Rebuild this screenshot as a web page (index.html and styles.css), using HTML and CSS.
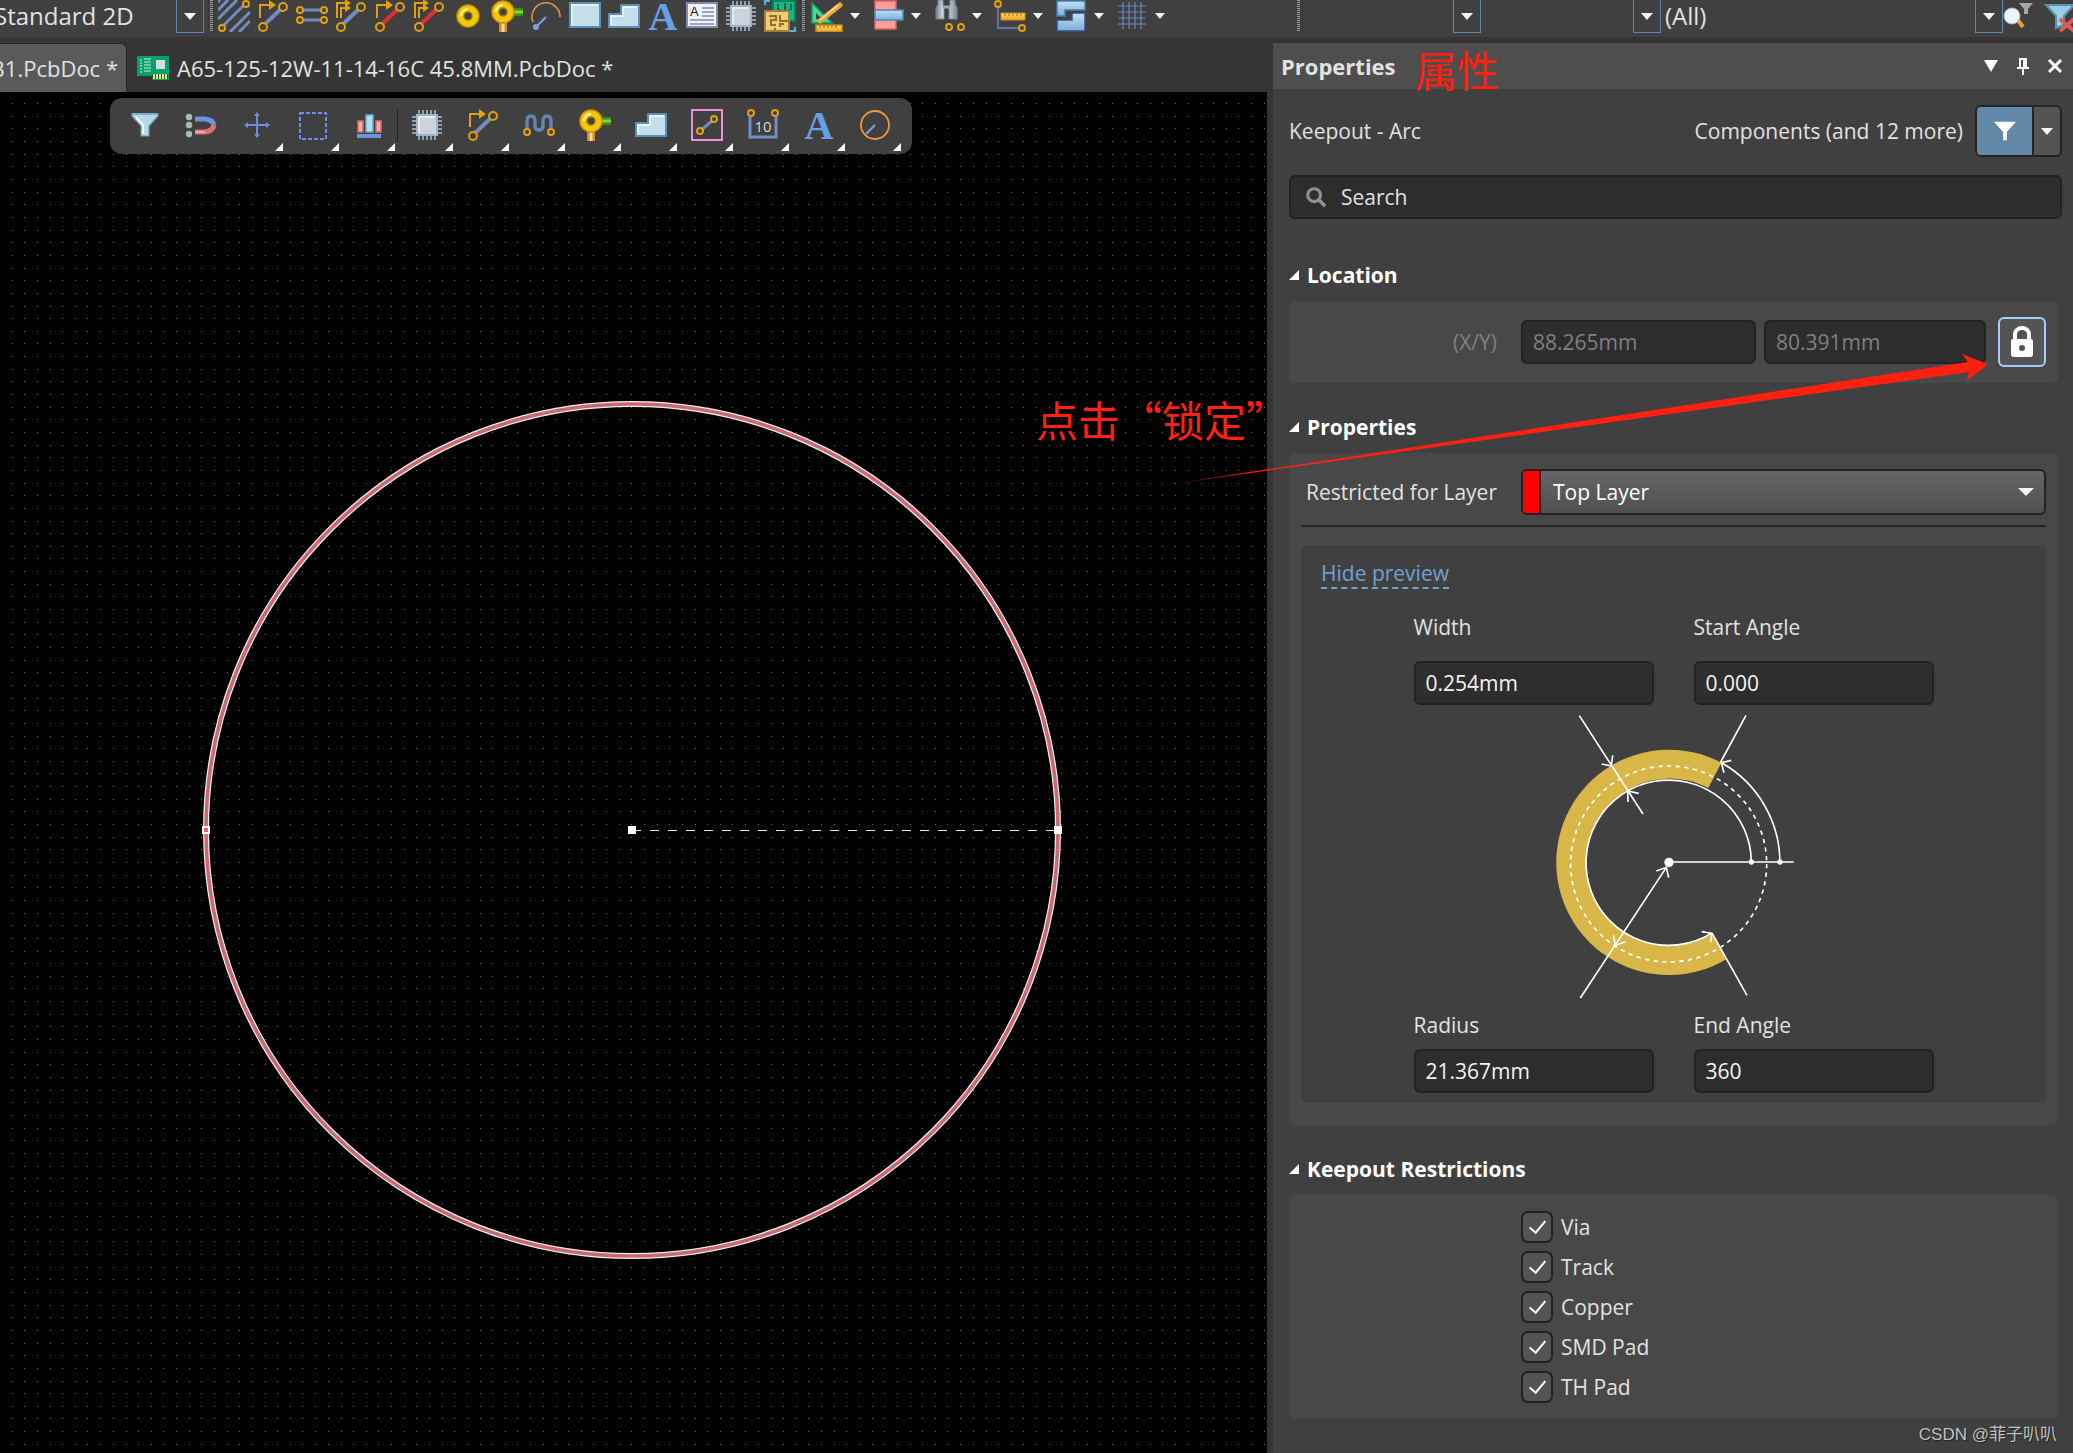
FILE: index.html
```html
<!DOCTYPE html>
<html lang="en">
<head>
<meta charset="utf-8">
<title>PCB Editor</title>
<link rel="stylesheet" href="styles.css">
</head>
<body>
<svg class="defs" width="0" height="0" aria-hidden="true">
  <defs>
    <linearGradient id="blueGrad" x1="0" y1="0" x2="0" y2="1"><stop offset="0" stop-color="#c4dff0"/><stop offset="1" stop-color="#78b0d8"/></linearGradient>
    <linearGradient id="goldGrad" x1="0" y1="0" x2="0" y2="1"><stop offset="0" stop-color="#ffe070"/><stop offset="1" stop-color="#e8a020"/></linearGradient>
    <linearGradient id="steelGrad" x1="0" y1="0" x2="1" y2="0"><stop offset="0" stop-color="#708090"/><stop offset=".4" stop-color="#e4ecf2"/><stop offset="1" stop-color="#7c8a98"/></linearGradient>
  </defs>
  <symbol id="i-hatch" viewBox="0 0 32 32"><path d="M0 10 10 0M0 19 19 0M6 25 26 5M12 32 32 12M21 32 32 21M0 2 2 0" stroke="#6f8fc4" stroke-width="3" fill="none"/><g fill="#404040" stroke="#e0a010" stroke-width="2"><circle cx="28" cy="4" r="3"/><circle cx="4" cy="28" r="3"/></g></symbol>
  <symbol id="i-route" viewBox="0 0 32 32"><path d="M6 26 26 7" stroke="#6f8cbd" stroke-width="4"/><path d="M3 18V5h11" stroke="#e0a010" stroke-width="2" fill="none"/><path d="M12 0l7 5-7 5z" fill="#e0a010"/><g fill="#404040" stroke="#e0a010" stroke-width="2"><circle cx="26" cy="7" r="4"/><circle cx="6" cy="27" r="4"/></g></symbol>
  <symbol id="i-route-red" viewBox="0 0 32 32"><path d="M6 26 26 7" stroke="#e03030" stroke-width="4"/><path d="M3 18V5h11" stroke="#e0a010" stroke-width="2" fill="none"/><path d="M12 0l7 5-7 5z" fill="#e0a010"/><g fill="#404040" stroke="#e0a010" stroke-width="2"><circle cx="26" cy="7" r="4"/><circle cx="6" cy="27" r="4"/></g></symbol>
  <symbol id="i-multi" viewBox="0 0 32 32"><path d="M6 26 26 7" stroke="#6f8cbd" stroke-width="4"/><path d="M2 18V3h10M6 18V8h6" stroke="#e0a010" stroke-width="2" fill="none"/><path d="M10-1l6 4-6 4zM10 4l6 4-6 4z" fill="#e0a010"/><g fill="#404040" stroke="#e0a010" stroke-width="2"><circle cx="26" cy="7" r="4"/><circle cx="6" cy="27" r="4"/></g></symbol>
  <symbol id="i-multi-red" viewBox="0 0 32 32"><path d="M6 26 26 7" stroke="#e03030" stroke-width="4"/><path d="M2 18V3h10M6 18V8h6" stroke="#e0a010" stroke-width="2" fill="none"/><path d="M10-1l6 4-6 4zM10 4l6 4-6 4z" fill="#e0a010"/><g fill="#404040" stroke="#e0a010" stroke-width="2"><circle cx="26" cy="7" r="4"/><circle cx="6" cy="27" r="4"/></g></symbol>
  <symbol id="i-pair" viewBox="0 0 32 32"><path d="M5 10h22M5 20h22" stroke="#6f8cbd" stroke-width="3"/><g fill="#404040" stroke="#e0a010" stroke-width="2"><circle cx="4" cy="10" r="3"/><circle cx="28" cy="10" r="3"/><circle cx="4" cy="20" r="3"/><circle cx="28" cy="20" r="3"/></g></symbol>
  <symbol id="i-pad" viewBox="0 0 32 32"><circle cx="16" cy="16" r="11" fill="#f2c80c" stroke="#c89008" stroke-width="1.5"/><path d="M9 16a7 7 0 0 1 7-7" stroke="#fff0a0" stroke-width="2" fill="none"/><circle cx="16" cy="16" r="4" fill="#404040" stroke="#a07808" stroke-width="1.5"/></symbol>
  <symbol id="i-via" viewBox="0 0 32 32"><path d="M20 12h12" stroke="#3c8c10" stroke-width="8"/><path d="M22 12h10" stroke="#8ccc50" stroke-width="3"/><path d="M12 20v12" stroke="#d88820" stroke-width="8"/><path d="M12 20v12" stroke="#ffd8a0" stroke-width="3"/><circle cx="12" cy="12" r="11" fill="#f2c80c" stroke="#c89008" stroke-width="1.5"/><path d="M5 12a7 7 0 0 1 7-7" stroke="#fff0a0" stroke-width="2" fill="none"/><circle cx="12" cy="12" r="4" fill="#404040" stroke="#a07808" stroke-width="1.5"/></symbol>
  <symbol id="i-arc" viewBox="0 0 32 32"><path d="M3 22A14 14 0 1 1 30 17" stroke="#e8923c" stroke-width="1.6" fill="none"/><path d="M6 27 16 17" stroke="#7ca0e8" stroke-width="2"/><circle cx="6" cy="27" r="3" fill="#7ca0e8"/></symbol>
  <symbol id="i-fill" viewBox="0 0 32 32"><path d="M1 3h30v24H1z" fill="#c3e0ea" stroke="#5b8fb8" stroke-width="2"/><path d="M3 25V5h26" stroke="#e8f6fa" stroke-width="1.5" fill="none"/></symbol>
  <symbol id="i-poly" viewBox="0 0 32 32"><path d="M1 27V14h12V5h18v22z" fill="#c3e0ea" stroke="#5b8fb8" stroke-width="2"/><path d="M3 25v-9h12V7h14" stroke="#f0fafc" stroke-width="1.5" fill="none"/></symbol>
  <symbol id="i-chip" viewBox="0 0 32 32"><path d="M8 1v30M12 1v30M16 1v30M20 1v30M24 1v30M1 8h30M1 12h30M1 16h30M1 20h30M1 24h30" stroke="#86a2b4" stroke-width="2"/><path d="M6 6h20v20H6z" fill="#ccd3da" stroke="#a0b4c4" stroke-width="2"/><path d="M8 24V8h16" stroke="#f0f4f6" stroke-width="1.5" fill="none"/></symbol>
  <symbol id="i-room" viewBox="0 0 32 32"><path d="M9 1h22v20H9z" fill="#12b888" stroke="#088058" stroke-width="2"/><path d="M14 4v5l4 3M21 3v9M27 4v5l-4 3" stroke="#086848" stroke-width="2" fill="none"/><path d="M1 11h24v20H1z" fill="#f0cc78" stroke="#a08040" stroke-width="2"/><path d="M5 16h7v4H7v5h5M16 15v6h8M16 27v-3h4M11 31v-3" stroke="#907030" stroke-width="2" fill="none"/><path d="M1 5V1h5M31 27v4h-5" stroke="#58b0e8" stroke-width="2" fill="none"/></symbol>
  <symbol id="i-draw" viewBox="0 0 32 32"><path d="M1 3v20h20z" fill="#48d890" stroke="#10a060" stroke-width="1.5"/><path d="M5 13v6h6z" fill="#404040"/><path d="M5 25h26v7H5z" fill="url(#goldGrad)" stroke="#c88818" stroke-width="1.5"/><path d="M9 25v3M13 25v3M17 25v3M21 25v3M25 25v3" stroke="#a06810"/><path d="M9 21 29 5" stroke="#e8a840" stroke-width="5" stroke-linecap="round"/><path d="M9 20 27 5" stroke="#ffe090" stroke-width="1.5"/></symbol>
  <symbol id="i-align" viewBox="0 0 32 32"><path d="M3 1h21v28H3z" fill="#ff9c98" stroke="#d86868" stroke-width="1.5"/><path d="M3 10h28v10H3z" fill="url(#blueGrad)" stroke="#4888b8" stroke-width="1.5"/></symbol>
  <symbol id="i-find" viewBox="0 0 32 32"><path d="M5 0h5v4l1 4v11H3V8l2-4zM17 0h5v4l2 4v11h-8V8l1-4z" fill="url(#steelGrad)" stroke="#788898"/><path d="M11 7h5" stroke="#98a8b8" stroke-width="3"/><g fill="#404040" stroke="#e0a010" stroke-width="2"><circle cx="16" cy="27" r="3"/><circle cx="28" cy="27" r="3"/></g></symbol>
  <symbol id="i-dim" viewBox="0 0 32 32"><path d="M4 4v24h24" stroke="#5878a8" stroke-width="2" fill="none"/><path d="M7 13h24v7H7z" fill="url(#goldGrad)" stroke="#d89020"/><path d="M11 13v3M15 13v3M19 13v3M23 13v3M27 13v3" stroke="#a06810"/><g fill="#404040" stroke="#e0a010" stroke-width="2"><circle cx="4" cy="4" r="3"/><circle cx="28" cy="28" r="3"/></g></symbol>
  <symbol id="i-plane" viewBox="0 0 32 32"><path d="M2 1h28v9H10v6H2z" fill="url(#blueGrad)" stroke="#4080b0" stroke-width="1.5"/><path d="M30 13v18H2V20h15v-7z" fill="url(#blueGrad)" stroke="#384c88" stroke-width="1.5"/></symbol>
  <symbol id="i-grid" viewBox="0 0 32 32"><path d="M2 6h28M2 12h28M2 18h28M2 24h28M7 2v27M13 2v27M19 2v27M25 2v27" stroke="#6488bc" stroke-width="1.2"/></symbol>
  <symbol id="i-lens" viewBox="0 0 32 32"><path d="M14 18l6 8" stroke="#e8a030" stroke-width="4"/><ellipse cx="9" cy="15" rx="8" ry="8" fill="#eaf4fc" stroke="#98b8d0"/><path d="M16 2h14l-5 6v5h-4V8z" fill="#a8a8ac"/></symbol>
  <symbol id="i-clear" viewBox="0 0 32 32"><path d="M2 4h28L20 15v9l-8 3V15z" fill="#9ccce0" stroke="#5890b8" stroke-width="2"/><path d="M16 18l14 12M30 18 16 30" stroke="#e05858" stroke-width="4"/></symbol>
  <symbol id="i-funnel" viewBox="0 0 32 32"><path d="M3 5h26v2L20 17v10h-8V17L3 7z" fill="#b8d8e2" stroke="#6898b4" stroke-width="1.2"/><path d="M7 8l7 8v9" stroke="#f0fafc" stroke-width="2" fill="none"/><path d="M3 5h26" stroke="#78b0d0" stroke-width="2"/></symbol>
  <symbol id="i-magnet" viewBox="0 0 32 32"><path d="M10 10h10q8 1 9 6" stroke="#6c94dc" stroke-width="5" fill="none"/><path d="M10 23h10q8-1 9-7" stroke="#dc7078" stroke-width="5" fill="none"/><path d="M10 23h10" stroke="#ffa8a8" stroke-width="2"/><g fill="#a0bcbc"><circle cx="4" cy="8" r="3.2"/><circle cx="4" cy="16" r="3.2"/><circle cx="4" cy="25" r="3.2"/></g></symbol>
  <symbol id="i-move" viewBox="0 0 32 32"><path d="M16 5v22M5 16h22" stroke="#6c8ce0" stroke-width="2"/><path d="M16 3l3 4h-6zM16 29l3-4h-6zM3 16l4-3v6zM29 16l-4-3v6z" fill="#6c8ce0"/></symbol>
  <symbol id="i-select" viewBox="0 0 32 32"><path d="M3 4h26v26H3z" stroke="#6c8ce8" stroke-width="2" stroke-dasharray="4 2" fill="none"/></symbol>
  <symbol id="i-bars" viewBox="0 0 32 32"><path d="M5 12h5v11H5zM23 12h5v11h-5z" fill="#ffa8a8" stroke="#d86870" stroke-width="1.5"/><path d="M13 6h7v17h-7z" fill="#b4def0" stroke="#70a8d0" stroke-width="1.5"/><path d="M4 27h24" stroke="#6898e0" stroke-width="4"/></symbol>
  <symbol id="i-tune" viewBox="0 0 32 32"><path d="M4 21V12q0-5 4-5t4 5v5q0 4 4 4t4-4v-5q0-5 4-5t4 5v9" stroke="#6884b4" stroke-width="3.4" fill="none"/><g fill="#404040" stroke="#e0a010" stroke-width="2"><circle cx="4" cy="23" r="3"/><circle cx="28" cy="23" r="3"/></g></symbol>
  <symbol id="i-keepout" viewBox="0 0 32 32"><path d="M1 1h30v30H1z" stroke="#f090d8" stroke-width="2" fill="none"/><path d="M9 22 22 11" stroke="#6f8cbd" stroke-width="3"/><g fill="#404040" stroke="#e0a010" stroke-width="2"><circle cx="23" cy="10" r="3"/><circle cx="9" cy="22" r="3"/></g></symbol>
  <symbol id="i-circle" viewBox="0 0 32 32"><circle cx="16" cy="16" r="14" stroke="#f09838" stroke-width="1.8" fill="none"/><path d="M7 25 16 16" stroke="#7ca0e8" stroke-width="2"/></symbol>
  <symbol id="i-pcb" viewBox="0 0 32 24"><path d="M0 0h32v24H15v-4H0z" fill="#08a070"/><path d="M3 4h2M3 7h2M3 10h2M3 13h2M3 16h2M7 3h7M7 6h7M7 9h7M7 12h7M7 15h7" stroke="#d8f4c8"/><path d="M19 4h9v9h-9z" fill="#d8dce0"/><path d="M15 18h16v5H15z" fill="#086040"/><path d="M17 18v5M20 18v5M23 18v5M26 18v5M29 18v5" stroke="#f0f060" stroke-width="2"/></symbol>
</svg>

<div class="app">
  <header class="toolbar">
    <div class="combo combo-view"><select aria-label="View configuration"><option>Standard 2D</option></select><span class="combo-arrow"></span></div>
    <span class="grip"></span>
    <div class="tools">
      <button aria-label="Hatch"><svg><use href="#i-hatch"/></svg></button>
      <button aria-label="Route"><svg><use href="#i-route"/></svg></button>
      <button aria-label="Differential pair"><svg><use href="#i-pair"/></svg></button>
      <button aria-label="Multi route"><svg><use href="#i-multi"/></svg></button>
      <button aria-label="Route track"><svg><use href="#i-route-red"/></svg></button>
      <button aria-label="Multi route tracks"><svg><use href="#i-multi-red"/></svg></button>
      <button aria-label="Pad"><svg><use href="#i-pad"/></svg></button>
      <button aria-label="Via"><svg><use href="#i-via"/></svg></button>
      <button aria-label="Arc"><svg><use href="#i-arc"/></svg></button>
      <button aria-label="Fill"><svg><use href="#i-fill"/></svg></button>
      <button aria-label="Polygon"><svg><use href="#i-poly"/></svg></button>
      <button aria-label="String"><svg viewBox="0 0 32 32"><text x="16" y="30" text-anchor="middle" class="glyph-a">A</text></svg></button>
      <button aria-label="Text frame"><svg viewBox="0 0 32 32"><path d="M1 3h30v24H1z" fill="#f2f2f6" stroke="#8888b0" stroke-width="2"/><path d="M16 8h12M16 12h12M16 16h12M4 20h24M4 24h24" stroke="#7888b8" stroke-width="1.5"/><text x="4" y="16" class="glyph-note">A</text></svg></button>
      <button aria-label="Component"><svg><use href="#i-chip"/></svg></button>
      <button aria-label="Room"><svg><use href="#i-room"/></svg></button>
    </div>
    <span class="grip"></span>
    <div class="tools tools-menu">
      <button aria-label="Drawing"><svg><use href="#i-draw"/></svg><i></i></button>
      <button aria-label="Align"><svg><use href="#i-align"/></svg><i></i></button>
      <button aria-label="Find"><svg><use href="#i-find"/></svg><i></i></button>
      <button aria-label="Dimension"><svg><use href="#i-dim"/></svg><i></i></button>
      <button aria-label="Planes"><svg><use href="#i-plane"/></svg><i></i></button>
      <button aria-label="Grid"><svg><use href="#i-grid"/></svg><i></i></button>
    </div>
    <div class="filters">
      <span class="grip"></span>
      <div class="combo combo-net"><select aria-label="Net"><option></option></select><span class="combo-arrow"></span></div>
      <div class="combo combo-component"><select aria-label="Component"><option></option></select><span class="combo-arrow"></span></div>
      <div class="combo combo-all"><select aria-label="Filter"><option>(All)</option></select><span class="combo-arrow"></span></div>
      <button aria-label="Apply filter"><svg><use href="#i-lens"/></svg></button>
      <button aria-label="Clear filter"><svg><use href="#i-clear"/></svg></button>
    </div>
  </header>

  <div class="work">
    <main class="editor">
      <nav class="tabs">
        <a class="tab tab-active" href="#pcb1"><span>PCB1.PcbDoc *</span></a>
        <a class="tab" href="#a65"><svg><use href="#i-pcb"/></svg><span>A65-125-12W-11-14-16C 45.8MM.PcbDoc *</span></a>
      </nav>
      <section class="board">
        <svg class="board-art" aria-label="Keepout arc">
          <defs>
            <pattern id="rows" width="215" height="215" patternUnits="userSpaceOnUse"><path d="M0 11.5h215M0 24.5h215M0 36.5h215M0 49.5h215M0 62.5h215M0 74.5h215M0 87.5h215M0 100.5h215M0 112.5h215M0 125.5h215M0 138.5h215M0 150.5h215M0 163.5h215M0 176.5h215M0 188.5h215M0 201.5h215M0 214.5h215" stroke="#707070"/></pattern>
            <pattern id="cols" width="215" height="215" patternUnits="userSpaceOnUse"><path d="M12.5 0v215M24.5 0v215M37.5 0v215M50.5 0v215M62.5 0v215M75.5 0v215M87.5 0v215M100.5 0v215M113.5 0v215M126.5 0v215M138.5 0v215M151.5 0v215M163.5 0v215M176.5 0v215M189.5 0v215M201.5 0v215M214.5 0v215" stroke="#fff"/></pattern>
            <mask id="colmask"><rect width="100%" height="100%" fill="url(#cols)"/></mask>
          </defs>
          <rect width="100%" height="100%" fill="url(#rows)" mask="url(#colmask)"/>
          <g fill="none">
            <circle cx="632" cy="738" r="426" stroke="#f8ecec" stroke-width="6"/>
            <circle cx="632" cy="738" r="426" stroke="#e4606c" stroke-width="3.6"/>
            <circle cx="632" cy="738" r="426" stroke="#908084" stroke-width="2" stroke-dasharray="7 5"/>
            <path d="M632 738.5h426" stroke="#e8e8e8" stroke-width="1.2" stroke-dasharray="9 9"/>
            <path d="M203 735h6v6h-6z" fill="#e4606c" stroke="#fff" stroke-width="2"/>
          </g>
          <path d="M628 734h8v8h-8zM1054 734h8v8h-8z" fill="#fff"/>
        </svg>
        <div class="active-bar">
          <button aria-label="Filter"><svg><use href="#i-funnel"/></svg></button>
          <button aria-label="Snap"><svg><use href="#i-magnet"/></svg></button>
          <button class="more" aria-label="Move"><svg><use href="#i-move"/></svg></button>
          <button class="more" aria-label="Select"><svg><use href="#i-select"/></svg></button>
          <button class="more divided" aria-label="Align"><svg><use href="#i-bars"/></svg></button>
          <button class="more" aria-label="Component"><svg><use href="#i-chip"/></svg></button>
          <button class="more" aria-label="Route"><svg><use href="#i-route"/></svg></button>
          <button class="more" aria-label="Tune"><svg><use href="#i-tune"/></svg></button>
          <button class="more" aria-label="Via"><svg><use href="#i-via"/></svg></button>
          <button class="more" aria-label="Polygon"><svg><use href="#i-poly"/></svg></button>
          <button class="more" aria-label="Keepout"><svg><use href="#i-keepout"/></svg></button>
          <button class="more" aria-label="Dimension"><svg viewBox="0 0 32 32"><path d="M3 8v20h26V8" stroke="#6f90c4" stroke-width="3" fill="none"/><g fill="#404040" stroke="#e0a010" stroke-width="2"><circle cx="4" cy="4" r="3"/><circle cx="28" cy="4" r="3"/></g><text x="16" y="23" text-anchor="middle" class="glyph-ten">10</text></svg></button>
          <button class="more" aria-label="String"><svg viewBox="0 0 32 32"><text x="16" y="30" text-anchor="middle" class="glyph-a">A</text></svg></button>
          <button class="more" aria-label="Circle"><svg><use href="#i-circle"/></svg></button>
        </div>
      </section>
    </main>

    <aside class="panel">
      <header class="panel-head">
        <h1>Properties</h1>
        <div class="panel-actions">
          <button aria-label="Menu"><svg viewBox="0 0 16 16"><path d="M1 2h14L8 14z" fill="#fff"/></svg></button>
          <button aria-label="Pin"><svg viewBox="0 0 16 18"><path d="M4 1h8v9h2v2H9v6H7v-6H2v-2h2zM6 3v7h2V3z" fill="#fff" fill-rule="evenodd"/></svg></button>
          <button aria-label="Close"><svg viewBox="0 0 16 16"><path d="M2 2l12 12M14 2 2 14" stroke="#fff" stroke-width="3"/></svg></button>
        </div>
      </header>

      <div class="panel-body">
        <div class="object-row">
          <span>Keepout - Arc</span>
          <span class="scope">Components (and 12 more)</span>
          <div class="split">
            <button class="split-main" aria-label="Filter"><svg viewBox="0 0 24 24"><path d="M0 2h24L14 13v9h-4v-9z" fill="#fff"/></svg></button>
            <button class="split-arrow" aria-label="Filter options"><i></i></button>
          </div>
        </div>
        <label class="search">
          <svg viewBox="0 0 24 24"><circle cx="10" cy="10" r="7" stroke="#909090" stroke-width="3.4" fill="none"/><path d="M15 15l7 7" stroke="#909090" stroke-width="4"/></svg>
          <input type="text" placeholder="Search" aria-label="Search">
        </label>

        <h2>Location</h2>
        <section class="card location">
          <label for="loc-x">(X/Y)</label>
          <div class="location-fields">
            <input class="field" id="loc-x" value="88.265mm" disabled>
            <input class="field" aria-label="Y" value="80.391mm" disabled>
            <button class="lock" aria-label="Lock"><svg viewBox="0 0 24 32"><path d="M5 14V8a7 6 0 0 1 14 0v6" stroke="#fff" stroke-width="4" fill="none"/><path d="M3 13h18q2 0 2 2v13q0 3-3 3H4q-3 0-3-3V15q0-2 2-2zm9 6a3 3 0 0 0-3 3 3 3 0 0 0 6 0 3 3 0 0 0-3-3z" fill="#fff"/></svg></button>
          </div>
        </section>

        <h2>Properties</h2>
        <section class="card props">
          <div class="layer-row">
            <label for="layer">Restricted for Layer</label>
            <div class="layer"><span class="swatch"></span><select id="layer"><option>Top Layer</option></select><i></i></div>
          </div>
          <div class="preview">
            <a class="preview-link" href="#preview">Hide preview</a>
            <div class="dims">
              <div class="dim"><label for="width">Width</label><input class="field" id="width" value="0.254mm"></div>
              <div class="dim"><label for="start">Start Angle</label><input class="field" id="start" value="0.000"></div>
              <svg class="diagram" viewBox="151 60 741 882" aria-label="Arc dimensions">
                <path d="M665 218A338 338 0 1 0 680 808L638 731A250 250 0 1 1 626 294z" fill="#d9b648"/>
                <g fill="none" stroke="#fff" stroke-width="5">
                  <path d="M755 516A248 248 0 1 0 636 730"/>
                  <circle cx="507" cy="522" r="294" stroke-dasharray="13 13"/>
                  <path d="M841 516A345 345 0 0 0 668 220M508 516h374M239 77 430 372M739 76 663 216M242 924 500 532M742 916 638 731"/>
                  <path d="M306 222l29 6 4-32M417 310l-33-7 1 33M695 211l-30 7 8 30M606 725l31 5-4 26M470 543l30-11 7 31M341 736l6 30 30-11"/>
                </g>
                <g fill="#fff"><circle cx="508" cy="517" r="14"/><circle cx="755" cy="516" r="8"/><circle cx="841" cy="516" r="8"/></g>
              </svg>
              <div class="dim dim-low"><label for="radius">Radius</label><input class="field" id="radius" value="21.367mm"></div>
              <div class="dim dim-low"><label for="end">End Angle</label><input class="field" id="end" value="360"></div>
            </div>
          </div>
        </section>

        <h2>Keepout Restrictions</h2>
        <section class="card checks">
          <label><input type="checkbox" checked>Via</label>
          <label><input type="checkbox" checked>Track</label>
          <label><input type="checkbox" checked>Copper</label>
          <label><input type="checkbox" checked>SMD Pad</label>
          <label><input type="checkbox" checked>TH Pad</label>
        </section>
      </div>

      <div class="note note-title">属性</div>
      <div class="note note-lock">点击“锁定”</div>
      <svg class="pointer" viewBox="0 0 830 136" aria-hidden="true"><defs><linearGradient id="fade"><stop offset="0" stop-color="#ff2010" stop-opacity=".3"/><stop offset=".1" stop-color="#ff2010"/></linearGradient></defs><path d="M2 133 805 10 799 2 825 12 804 29 806 20z" fill="url(#fade)"/></svg>
      <div class="credit">CSDN @菲子叭叭</div>
    </aside>
  </div>
</div>
</body>
</html>
```
FILE: styles.css
```css
* { box-sizing: border-box; }

body {
  margin: 0;
  background: #353535;
  color: #e2e2e2;
  font: 21px/28px "Open Sans", "Noto Sans CJK SC", sans-serif;
}

button, input, select {
  margin: 0;
  padding: 0;
  border: 0;
  background: none;
  color: inherit;
  font: inherit;
  appearance: none;
}

h1, h2 { margin: 0; font-size: 21px; line-height: 28px; font-weight: 700; }
h1 { font-size: 22px; }
a { color: inherit; text-decoration: none; }
svg { display: block; }
.defs { position: absolute; }

.glyph-a { font: bold 40px "Liberation Serif", serif; fill: #68a0e8; }
.glyph-note { font: 13px "Liberation Sans", sans-serif; fill: #202020; }
.glyph-ten { font: 15px "Open Sans", sans-serif; fill: #d8d8d8; }

.app { min-height: 100vh; display: flex; flex-direction: column; overflow: hidden; }

/* Top toolbar */
.toolbar { display: flex; align-items: flex-start; height: 37px; background: #404040; overflow: hidden; }
.toolbar svg { width: 32px; height: 32px; }
.combo { display: flex; flex: none; height: 33px; }
.combo select { flex: 1; min-width: 0; height: 32px; font-size: 24px; line-height: 32px; }
.combo-arrow { width: 28px; border: 1px solid #6088b0; border-top: 0; display: grid; place-items: center; }
.combo-arrow::after, .tools i, .split-arrow i, .layer i {
  content: "";
  border: solid transparent;
  border-width: 7px 6px 0;
  border-top-color: #f4f4f4;
}
.combo-view { width: 210px; margin-left: -6px; }
.grip { flex: none; width: 3px; height: 31px; background: repeating-linear-gradient(#a0a0a0 0 1px, #404040 1px 2px); }
.combo-view + .grip { margin: 0 5px 0 6px; }
.tools { display: flex; gap: 7px; }
.tools + .grip { margin: 0 6px; }
.tools-menu { gap: 5px; }
.tools-menu button { display: flex; align-items: center; gap: 7px; width: 56px; }
.tools-menu i { border-width: 6px 5px 0; }
.filters { display: flex; width: 776px; margin-left: auto; flex: none; }
.combo-net { width: 180px; margin-left: 1px; }
.combo-component { width: 180px; }
.combo-all { width: 342px; padding-left: 4px; }
.filters button { flex: none; width: 41px; }

/* Work area */
.work { flex: 1; display: flex; }
.editor { flex: 1; min-width: 0; display: flex; flex-direction: column; }
.tabs { display: flex; height: 55px; padding-top: 6px; align-items: center; }
.tab { display: flex; align-items: center; gap: 8px; height: 49px; padding-left: 10px; font-size: 22px; white-space: nowrap; }
.tab svg { width: 32px; height: 24px; }
.tab-active {
  width: 127px;
  justify-content: flex-end;
  padding: 0 8px 0 0;
  overflow: hidden;
  background: #5a5a5a;
  border: solid #242424;
  border-width: 1px 1px 0 0;
  border-radius: 0 6px 0 0;
}
.board { flex: 1; position: relative; background: #000; padding: 6px 0 0 110px; }
.board-art { position: absolute; inset: 0; width: 100%; height: 100%; }
.active-bar {
  position: relative;
  display: inline-flex;
  height: 56px;
  padding: 0 9px 0 7px;
  background: #404040;
  border-radius: 12px;
}
.active-bar button { position: relative; width: 56px; padding-bottom: 2px; display: grid; place-items: center; }
.active-bar svg { width: 32px; height: 32px; }
.more::after {
  content: "";
  position: absolute;
  right: 2px;
  bottom: 3px;
  border: solid transparent;
  border-width: 0 0 8px 8px;
  border-bottom-color: #fff;
}
.active-bar .divided { margin-right: 2px; }
.divided::before { content: ""; position: absolute; right: -1px; top: 12px; width: 1px; height: 32px; background: #202020; }

/* Properties panel */
.panel { position: relative; width: 800px; margin: 6px 0 0 6px; background: #404040; }
.panel-head { display: flex; align-items: center; justify-content: space-between; height: 46px; padding: 0 8px; background: #4e4e4e; }
.panel-actions { display: flex; gap: 14px; }
.panel-actions button { width: 18px; }
.panel-actions svg { width: 16px; height: 18px; }
.panel-body { padding: 16px 15px 34px 16px; }

.object-row { display: flex; align-items: center; margin-right: -4px; }
.scope { margin-left: auto; }
.split { display: flex; width: 87px; height: 52px; margin-left: 12px; border: 2px solid #242424; border-radius: 6px; overflow: hidden; }
.split-main { flex: 1; display: grid; place-items: center; background: #6488a8; }
.split-main svg { width: 24px; height: 22px; }
.split-arrow { width: 28px; display: grid; place-items: center; background: #545454; border-left: 2px solid #242424; }
.search {
  display: flex;
  align-items: center;
  gap: 14px;
  height: 44px;
  margin: 18px -4px 42px 0;
  padding: 0 14px;
  background: #2d2d2d;
  border: 2px solid #222;
  border-radius: 6px;
}
.search svg { width: 22px; height: 22px; }
.search input { flex: 1; outline: 0; }
.search input::placeholder { color: #e2e2e2; opacity: 1; }

h2 { display: flex; align-items: center; gap: 8px; margin-bottom: 12px; color: #fff; }
h2::before { content: ""; border: solid transparent; border-width: 0 0 10px 10px; border-bottom-color: #fff; }

.card { background: #484848; border-radius: 6px; margin-bottom: 30px; }
.field {
  width: 100%;
  min-width: 0;
  height: 44px;
  padding: 0 10px;
  background: #2d2d2d;
  border: 2px solid #222;
  border-radius: 6px;
  color: #f4f4f4;
}
.field:disabled { color: #808080; }

.location, .layer-row { display: grid; grid-template-columns: 208px 1fr; column-gap: 24px; align-items: center; }
.location { padding: 16px 12px 16px 0; color: #808080; }
.location > label, .layer-row > label { text-align: right; }
.location-fields { display: grid; grid-template-columns: 235fr 222fr 52px; column-gap: 8px; align-items: center; }
.lock { width: 48px; height: 50px; justify-self: end; display: grid; place-items: center; background: #545454; border: 2px solid #a0d0ff; border-radius: 6px; }
.lock svg { width: 24px; height: 32px; }

.props { padding: 16px 12px 22px; }
.layer-row { grid-template-columns: 196px 1fr; padding-bottom: 10px; border-bottom: 2px solid #242424; }
.layer {
  display: flex;
  height: 46px;
  align-items: center;
  padding-right: 10px;
  background: linear-gradient(#666, #505050);
  border: 2px solid #222;
  border-radius: 6px;
  overflow: hidden;
}
.swatch { width: 18px; height: 100%; background: #f00; border-right: 2px solid #222; }
.layer select { flex: 1; height: 42px; padding-left: 12px; color: #fff; }
.layer i { border-width: 8px 8px 0; }

.preview { margin-top: 18px; padding: 14px 20px 10px; background: #404040; border-radius: 6px; }
.preview-link { display: inline-block; color: #70a0d4; border-bottom: 2px dashed #70a0d4; }
.dims { display: grid; grid-template-columns: 240px 240px; column-gap: 40px; justify-content: center; padding-top: 24px; }
.dim { display: flex; flex-direction: column; gap: 20px; }
.dim-low { gap: 10px; }
.diagram { grid-column: 1 / -1; justify-self: center; width: 247px; height: 294px; margin: 5px 0 7px; }

.checks { display: flex; flex-direction: column; gap: 8px; padding: 16px 0 16px 232px; margin-bottom: 0; }
.checks label { display: flex; align-items: center; gap: 8px; height: 32px; }
.checks input { width: 32px; height: 32px; display: grid; place-items: center; background: #545454; border: 2px solid #222; border-radius: 7px; }
.checks input:checked::before {
  content: "";
  width: 7px;
  height: 14px;
  margin-bottom: 4px;
  border: solid #fff;
  border-width: 0 2px 2px 0;
  transform: rotate(40deg);
}

/* Callouts over the panel and board */
.note { position: absolute; color: #ff2010; font: 42px/48px "Noto Sans CJK SC", sans-serif; white-space: nowrap; }
.note-title { left: 142px; top: 2px; }
.note-lock { right: 785px; top: 352px; }
.pointer { position: absolute; right: 80px; top: 309px; width: 830px; height: 136px; }
.credit { position: absolute; right: 16px; bottom: 5px; color: #c0c0c0; font: 17px/26px "Liberation Sans", "Noto Sans CJK SC", sans-serif; text-shadow: 1px 1px 1px #222; }
```
